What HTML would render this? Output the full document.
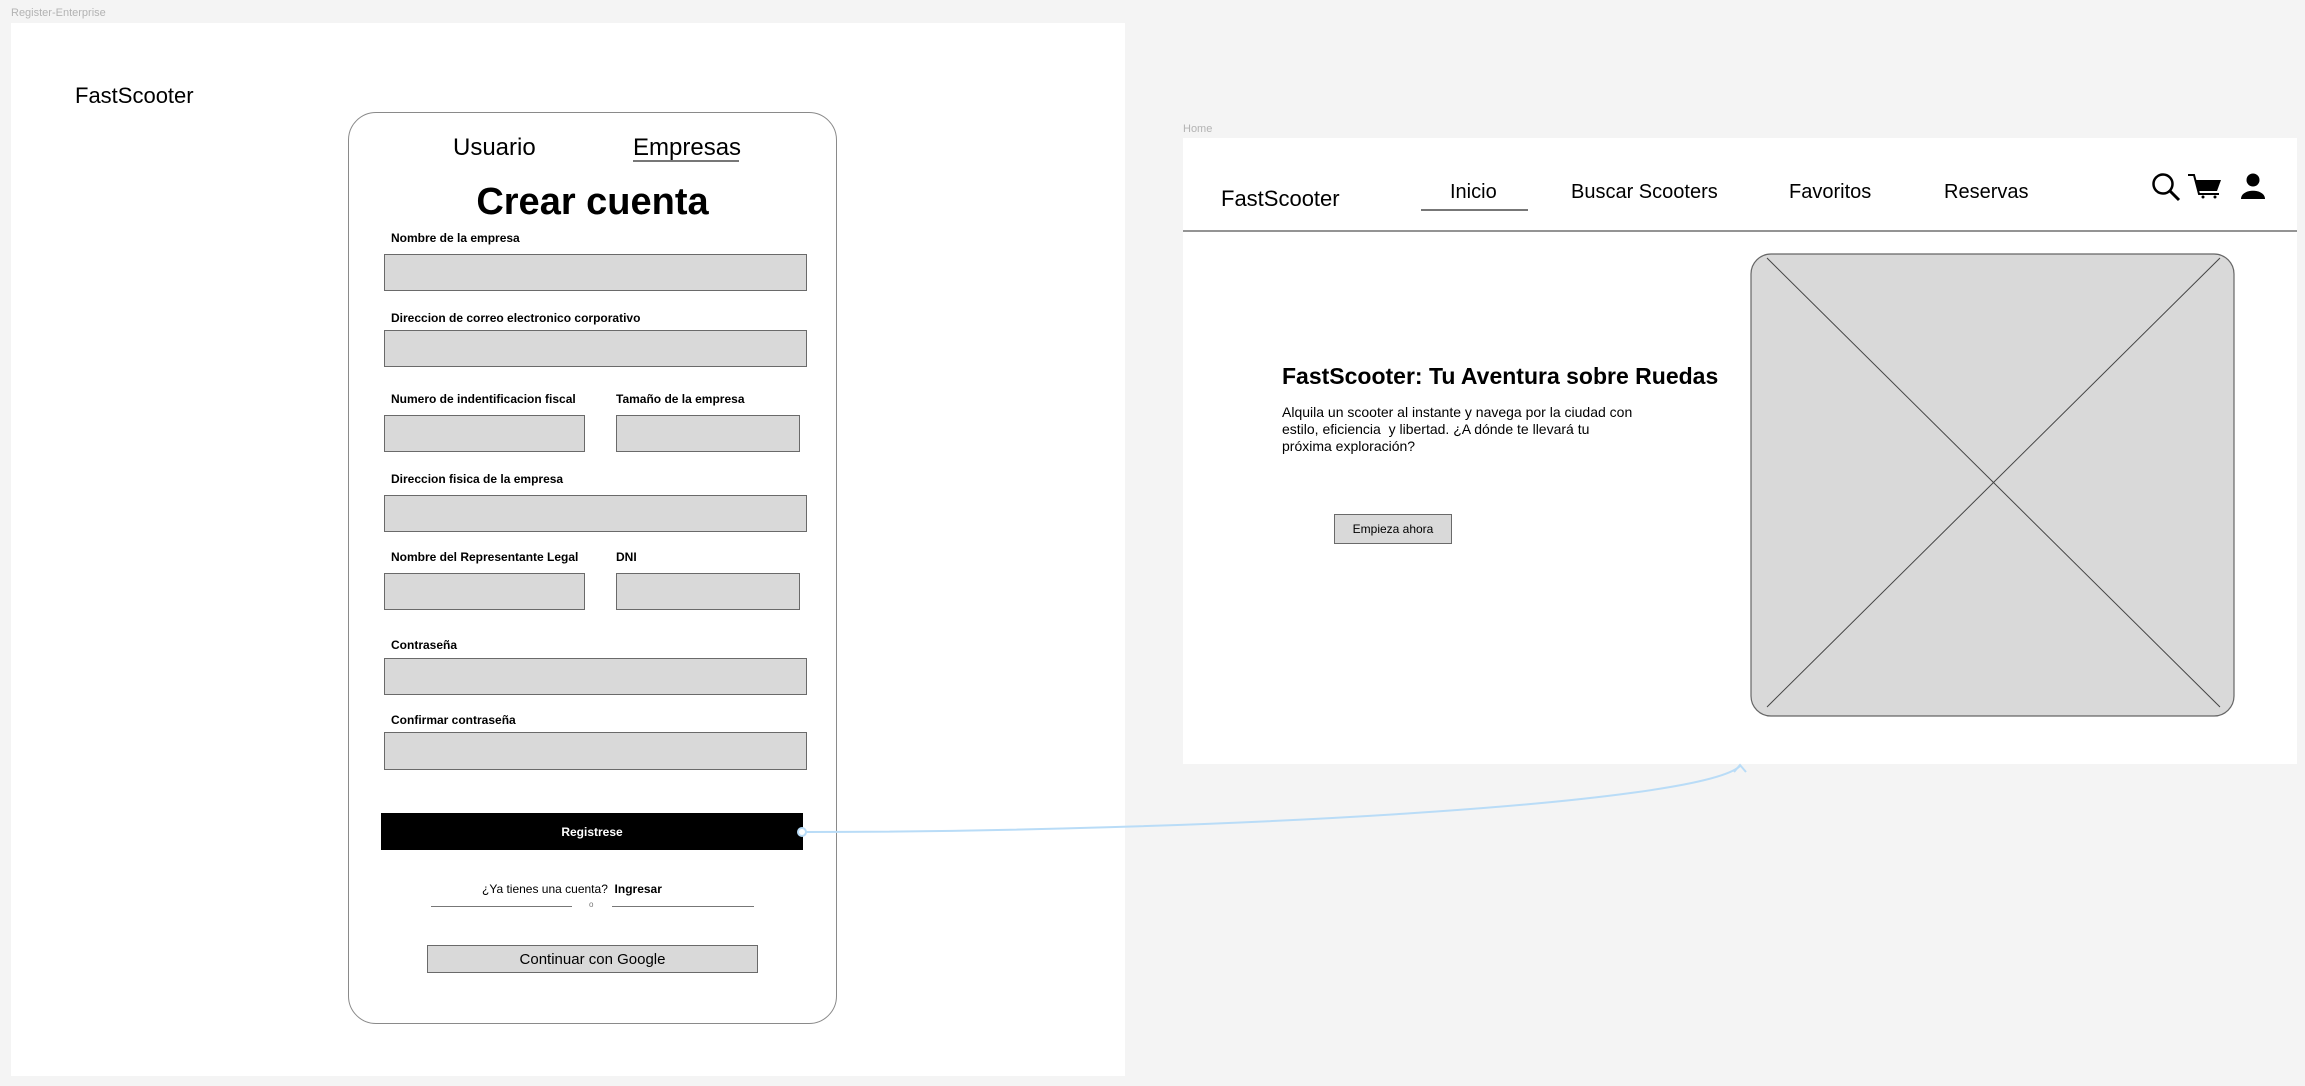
<!DOCTYPE html>
<html><head><meta charset="utf-8"><style>
*{margin:0;padding:0;box-sizing:border-box}
body{width:2305px;height:1086px;background:#f4f4f4;position:relative;overflow:hidden;font-family:"Liberation Sans",Arial,sans-serif;color:#000}
.a{position:absolute;white-space:nowrap}
.lbl{position:absolute;font-size:12px;font-weight:bold;white-space:nowrap;line-height:14px}
.in{position:absolute;background:#d9d9d9;border:1.5px solid #6a6a6a}
</style></head><body>
<div class="a" style="left:11px;top:7px;font-size:11px;color:#b3b3b3">Register-Enterprise</div>
<div class="a" style="left:11px;top:23px;width:1114px;height:1053px;background:#fff"></div>
<div class="a" style="left:75px;top:83px;font-size:22px">FastScooter</div>

<div class="a" style="left:348px;top:112px;width:489px;height:912px;border:1.5px solid #8a8a8a;border-radius:28px;background:#fff"></div>
<div class="a" style="left:453px;top:134px;font-size:24px">Usuario</div>
<div class="a" style="left:633px;top:134px;font-size:24px">Empresas</div>
<div class="a" style="left:633px;top:160px;width:106px;height:1.5px;background:#777"></div>
<div class="a" style="left:348px;top:181px;width:489px;text-align:center;font-size:38px;font-weight:bold">Crear cuenta</div>

<div class="lbl" style="left:391px;top:231px">Nombre de la empresa</div>
<div class="in" style="left:384px;top:254px;width:423px;height:37px"></div>
<div class="lbl" style="left:391px;top:311px">Direccion de correo electronico corporativo</div>
<div class="in" style="left:384px;top:330px;width:423px;height:37px"></div>
<div class="lbl" style="left:391px;top:392px">Numero de indentificacion fiscal</div>
<div class="lbl" style="left:616px;top:392px">Tamaño de la empresa</div>
<div class="in" style="left:384px;top:415px;width:201px;height:37px"></div>
<div class="in" style="left:616px;top:415px;width:184px;height:37px"></div>
<div class="lbl" style="left:391px;top:472px">Direccion fisica de la empresa</div>
<div class="in" style="left:384px;top:495px;width:423px;height:37px"></div>
<div class="lbl" style="left:391px;top:550px">Nombre del Representante Legal</div>
<div class="lbl" style="left:616px;top:550px">DNI</div>
<div class="in" style="left:384px;top:573px;width:201px;height:37px"></div>
<div class="in" style="left:616px;top:573px;width:184px;height:37px"></div>
<div class="lbl" style="left:391px;top:638px">Contraseña</div>
<div class="in" style="left:384px;top:658px;width:423px;height:37px"></div>
<div class="lbl" style="left:391px;top:713px">Confirmar contraseña</div>
<div class="in" style="left:384px;top:732px;width:423px;height:38px"></div>

<div class="a" style="left:381px;top:813px;width:422px;height:37px;background:#000;color:#fff;font-size:12px;font-weight:bold;text-align:center;line-height:38px">Registrese</div>
<div class="a" style="left:482px;top:882px;font-size:12px">¿Ya tienes una cuenta?&nbsp; <b>Ingresar</b></div>
<div class="a" style="left:431px;top:906px;width:141px;height:1px;background:#777"></div>
<div class="a" style="left:612px;top:906px;width:142px;height:1px;background:#777"></div>
<div class="a" style="left:589px;top:900px;font-size:8px;color:#777">o</div>
<div class="a" style="left:427px;top:945px;width:331px;height:28px;background:#d9d9d9;border:1.5px solid #6a6a6a;font-size:15px;text-align:center;line-height:27px">Continuar con Google</div>

<div class="a" style="left:1183px;top:123px;font-size:11px;color:#b3b3b3">Home</div>
<div class="a" style="left:1183px;top:138px;width:1114px;height:626px;background:#fff"></div>
<div class="a" style="left:1221px;top:186px;font-size:22px">FastScooter</div>
<div class="a" style="left:1450px;top:181px;font-size:20px">Inicio</div>
<div class="a" style="left:1421px;top:209px;width:107px;height:1.5px;background:#777"></div>
<div class="a" style="left:1571px;top:181px;font-size:20px">Buscar Scooters</div>
<div class="a" style="left:1789px;top:181px;font-size:20px">Favoritos</div>
<div class="a" style="left:1944px;top:181px;font-size:20px">Reservas</div>
<svg class="a" style="left:0;top:0" width="2305" height="1086">
<circle cx="2163" cy="184" r="9.5" fill="none" stroke="#000" stroke-width="2.5"/>
<line x1="2170" y1="191" x2="2179" y2="200" stroke="#000" stroke-width="3"/>
<path d="M2188 175 H2194 L2199 194 H2219" fill="none" stroke="#000" stroke-width="2"/>
<path d="M2195 180 H2221 L2217 191 H2198 Z" fill="#000"/>
<circle cx="2203" cy="197" r="1.5" fill="#000"/><circle cx="2215" cy="197" r="1.5" fill="#000"/>
<circle cx="2253" cy="180" r="6.5" fill="#000"/>
<path d="M2241 199 C2241 188 2265 188 2265 199 Z" fill="#000"/>
<line x1="1183" y1="231" x2="2297" y2="231" stroke="#555" stroke-width="1.2"/>
<rect x="1751" y="254" width="483" height="462" rx="20" fill="#d9d9d9" stroke="#666" stroke-width="1.2"/>
<line x1="1767" y1="258" x2="2220" y2="707" stroke="#444" stroke-width="1"/>
<line x1="2220" y1="258" x2="1767" y2="707" stroke="#444" stroke-width="1"/>
<path d="M803 832 C1200 832 1700 805 1740 766" fill="none" stroke="#b9dcf7" stroke-width="2"/>
<path d="M1734 772 L1740 765 L1746 772" fill="none" stroke="#b9dcf7" stroke-width="2"/>
<circle cx="802" cy="832" r="4" fill="#fff" stroke="#b9dcf7" stroke-width="2"/>
</svg>
<div class="a" style="left:1282px;top:363px;font-size:23px;font-weight:bold">FastScooter: Tu Aventura sobre Ruedas</div>
<div class="a" style="left:1282px;top:404px;font-size:14px;line-height:17px;white-space:normal;width:420px">Alquila un scooter al instante y navega por la ciudad con<br>estilo, eficiencia&nbsp; y libertad. ¿A dónde te llevará tu<br>próxima exploración?</div>
<div class="a" style="left:1334px;top:514px;width:118px;height:30px;background:#d9d9d9;border:1px solid #6a6a6a;font-size:12px;text-align:center;line-height:28px">Empieza ahora</div>
</body></html>
